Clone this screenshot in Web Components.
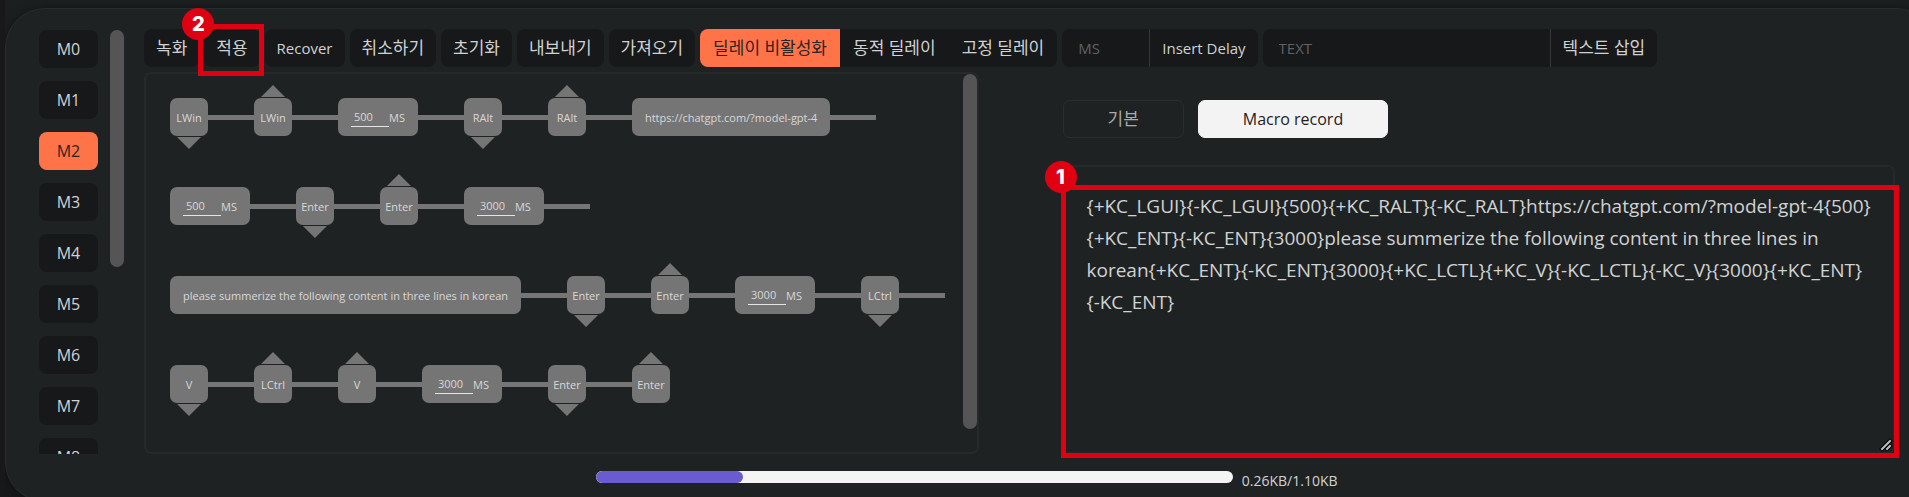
<!DOCTYPE html>
<html lang="ko">
<head>
<meta charset="utf-8">
<title>Macro</title>
<style>
    html {
        height: 100%;
        overflow: hidden;
        background: linear-gradient(#1c1f20 50%, #17181a 80%);
    }
    body {
        margin: 0;
        height: 100%;
        border-left: 5px solid #17181a;
        box-sizing: border-box;
        overflow: hidden;
        font-family: "Open Sans", "Noto Sans CJK KR", sans-serif;
        font-size: 15px;
        color: #d0d2d3;
    }
</style>
</head>
<body>
<macro-page></macro-page>

<script>
const define = (name, html, setup) => {
    const template = document.createElement("template");
    template.innerHTML = html;
    window.customElements.define(name, class extends HTMLElement {
        constructor() {
            super();
            this.attachShadow({ mode: "open" });
            this.shadowRoot.appendChild(template.content.cloneNode(true));
        }

        connectedCallback() {
            if (setup) setup(this, this.shadowRoot);
        }
    });
};

// numbered red frame drawn over whatever it wraps
define("callout-mark", `
<style>
    :host {
        display: block;
        position: relative;
    }
    .frame {
        position: absolute;
        inset: var(--frame-inset, 0);
        border: 5px solid #df0012;
        pointer-events: none;
        z-index: 2;
    }
    .badge {
        position: absolute;
        left: -21px;
        top: var(--badge-top, -21px);
        width: 32px;
        height: 32px;
        border-radius: 50%;
        background: #df0012;
        color: #fff;
        font: 800 20px/32px Inter, sans-serif;
        text-align: center;
    }
</style>
<slot></slot>
<div class="frame"><span class="badge"></span></div>
`, (el, root) => {
    root.querySelector(".badge").textContent = el.getAttribute("number");
});

define("tool-button", `
<style>
    :host {
        display: block;
    }
    button {
        display: block;
        height: 38px;
        padding: 0 var(--pad, 12px);
        border: 0;
        border-radius: var(--radius, 8px);
        background: #17181a;
        color: inherit;
        font: inherit;
        white-space: nowrap;
        cursor: pointer;
    }
    :host([lang="ko"]) button {
        padding-bottom: 3px;
        font-size: 17px;
    }
    :host([active]) button {
        background: #ff7348;
        color: #2b2422;
    }
</style>
<button type="button"><slot></slot></button>
`);

define("tool-insert", `
<style>
    :host {
        display: flex;
        height: 38px;
        border-radius: 8px;
        overflow: hidden;
        background: #17181a;
        --radius: 0;
    }
    input {
        width: var(--field, 88px);
        box-sizing: border-box;
        padding: 0 16px;
        border: 0;
        border-right: 1px solid #34373a;
        outline: 0;
        background: none;
        color: inherit;
        font: inherit;
    }
    input::placeholder {
        color: #5f6162;
        opacity: 1;
    }
</style>
<input type="text">
<slot></slot>
`, (el, root) => {
    const input = root.querySelector("input");
    input.placeholder = el.getAttribute("placeholder");
    input.setAttribute("aria-label", el.getAttribute("placeholder"));
});

define("tool-bar", `
<style>
    :host {
        display: flex;
        gap: 5px;
    }
    .segments {
        display: flex;
        border-radius: 8px;
        overflow: hidden;
        --radius: 0;
        --pad: 13px;
    }
    callout-mark {
        --frame-inset: -5px -4px -9px -6px;
    }
    .text {
        --field: 288px;
    }
</style>
<tool-button lang="ko">녹화</tool-button>
<callout-mark number="2"><tool-button lang="ko">적용</tool-button></callout-mark>
<tool-button>Recover</tool-button>
<tool-button lang="ko">취소하기</tool-button>
<tool-button lang="ko">초기화</tool-button>
<tool-button lang="ko">내보내기</tool-button>
<tool-button lang="ko">가져오기</tool-button>
<div class="segments">
    <tool-button lang="ko" active>딜레이 비활성화</tool-button>
    <tool-button lang="ko">동적 딜레이</tool-button>
    <tool-button lang="ko">고정 딜레이</tool-button>
</div>
<tool-insert placeholder="MS"><tool-button>Insert Delay</tool-button></tool-insert>
<tool-insert class="text" placeholder="TEXT"><tool-button lang="ko">텍스트 삽입</tool-button></tool-insert>
`);

define("macro-list", `
<style>
    :host {
        display: flex;
        gap: 12px;
        min-height: 0;
        overflow: hidden;
    }
    nav {
        display: flex;
        flex-direction: column;
        gap: 13px;
        font-size: 16px;
    }
    button {
        flex: none;
        width: 59px;
        height: 38px;
        padding: 0;
        border: 0;
        border-radius: 8px;
        background: #17181a;
        color: inherit;
        font: inherit;
        cursor: pointer;
    }
    button[aria-current] {
        background: #ff7348;
        color: #2b2422;
    }
    .thumb {
        flex: none;
        width: 14px;
        height: 56%;
        border-radius: 7px;
        background: #555;
    }
</style>
<nav></nav>
<div class="thumb"></div>
`, (el, root) => {
    const nav = root.querySelector("nav");
    for (let i = 0; i < 9; i++) {
        const button = document.createElement("button");
        button.type = "button";
        button.textContent = "M" + i;
        if (i === Number(el.getAttribute("selected"))) button.setAttribute("aria-current", "true");
        nav.appendChild(button);
    }
});

// one step of the macro: key down, key up, text, or a delay with an editable value
define("macro-step", `
<style>
    :host {
        display: flex;
        align-items: center;
        position: relative;
    }
    .node {
        display: flex;
        align-items: center;
        justify-content: center;
        box-sizing: border-box;
        min-width: 38px;
        height: 38px;
        border-radius: 7px;
        background: #757575;
        color: #d8d8d8;
        font-size: 11px;
        white-space: nowrap;
    }
    :host([type="text"]) .node,
    :host([type="delay"]) .node {
        padding: 0 13px;
    }
    .line {
        width: 46px;
        height: 5px;
        background: #757575;
    }
    :host([last]) .line {
        display: none;
    }
    :host([type="down"])::after,
    :host([type="up"])::before {
        content: "";
        position: absolute;
        left: 7px;
        width: 24px;
        height: 12px;
        background: #757575;
    }
    :host([type="down"])::after {
        top: 39px;
        clip-path: polygon(0 0, 100% 0, 50% 100%);
    }
    :host([type="up"])::before {
        bottom: 39px;
        clip-path: polygon(0 100%, 100% 100%, 50% 0);
    }
    input {
        width: 38px;
        height: 20px;
        box-sizing: border-box;
        padding: 0 3px;
        border: 0;
        border-bottom: 1px solid #e4e4e4;
        outline: 0;
        background: none;
        color: inherit;
        font: inherit;
    }
</style>
<div class="node"><slot></slot></div>
<div class="line"></div>
`, (el, root) => {
    if (el.getAttribute("type") !== "delay") return;
    const input = document.createElement("input");
    input.type = "text";
    input.value = el.getAttribute("value");
    input.setAttribute("aria-label", "MS");
    root.querySelector(".node").prepend(input);
});

define("macro-flow", `
<style>
    :host {
        display: flex;
        box-sizing: border-box;
        border: 2px solid #262929;
        border-radius: 7px;
        overflow: hidden;
    }
    .rows {
        flex: 1;
        min-width: 0;
        display: flex;
        flex-direction: column;
        gap: 51px;
        padding: 24px 0 24px 24px;
    }
    .row {
        display: flex;
    }
    .thumb {
        flex: none;
        width: 14px;
        height: 94%;
        border-radius: 7px;
        background: #555;
    }
</style>
<div class="rows">
    <div class="row">
        <macro-step type="down">LWin</macro-step>
        <macro-step type="up">LWin</macro-step>
        <macro-step type="delay" value="500">MS</macro-step>
        <macro-step type="down">RAlt</macro-step>
        <macro-step type="up">RAlt</macro-step>
        <macro-step type="text">https://chatgpt.com/?model-gpt-4</macro-step>
    </div>
    <div class="row">
        <macro-step type="delay" value="500">MS</macro-step>
        <macro-step type="down">Enter</macro-step>
        <macro-step type="up">Enter</macro-step>
        <macro-step type="delay" value="3000">MS</macro-step>
    </div>
    <div class="row">
        <macro-step type="text">please summerize the following content in three lines in korean</macro-step>
        <macro-step type="down">Enter</macro-step>
        <macro-step type="up">Enter</macro-step>
        <macro-step type="delay" value="3000">MS</macro-step>
        <macro-step type="down">LCtrl</macro-step>
    </div>
    <div class="row">
        <macro-step type="down">V</macro-step>
        <macro-step type="up">LCtrl</macro-step>
        <macro-step type="up">V</macro-step>
        <macro-step type="delay" value="3000">MS</macro-step>
        <macro-step type="down">Enter</macro-step>
        <macro-step type="up" last>Enter</macro-step>
    </div>
</div>
<div class="thumb"></div>
`);

define("macro-editor", `
<style>
    :host {
        display: flex;
        flex-direction: column;
    }
    .tabs {
        display: flex;
        gap: 14px;
        padding: 28px 0 0 2px;
        margin-bottom: 27px;
    }
    .tabs button {
        box-sizing: border-box;
        height: 38px;
        padding: 0 44px;
        border: 1px solid #2b2e2f;
        border-radius: 7px;
        background: none;
        color: #a9abac;
        font: inherit;
        font-size: 16px;
    }
    .tabs button[lang="ko"] {
        padding-bottom: 3px;
        font-size: 17px;
    }
    .tabs button[aria-selected="true"] {
        border-color: #f3f3f3;
        background: #f3f3f3;
        color: #1f2223;
    }
    callout-mark {
        flex: 1;
        display: flex;
        --frame-inset: 20px -4px -4px 0;
        --badge-top: -29px;
    }
    textarea {
        flex: 1;
        box-sizing: border-box;
        margin: 0;
        padding: 23px 20px 0 24px;
        border: 2px solid #262929;
        border-radius: 7px;
        outline: 0;
        background: none;
        color: inherit;
        font: inherit;
        font-size: 19px;
        line-height: 32px;
        resize: both;
    }
    textarea::-webkit-resizer {
        background: url("data:image/svg+xml,%3Csvg xmlns='http://www.w3.org/2000/svg' width='15' height='15'%3E%3Cg fill='none' stroke-linecap='square'%3E%3Cpath d='M4 12L12 4M9 12L12 9' stroke='%23000' stroke-width='4'/%3E%3Cpath d='M4 12L12 4M9 12L12 9' stroke='%23bbb' stroke-width='2'/%3E%3C/g%3E%3C/svg%3E") no-repeat right bottom;
    }
</style>
<div class="tabs" role="tablist">
    <button type="button" role="tab" lang="ko" aria-selected="false">기본</button>
    <button type="button" role="tab" aria-selected="true">Macro record</button>
</div>
<callout-mark number="1">
    <textarea aria-label="Macro" spellcheck="false">{+KC_LGUI}{-KC_LGUI}{500}{+KC_RALT}{-KC_RALT}https://chatgpt.com/?model-gpt-4{500}{+KC_ENT}{-KC_ENT}{3000}please summerize the following content in three lines in korean{+KC_ENT}{-KC_ENT}{3000}{+KC_LCTL}{+KC_V}{-KC_LCTL}{-KC_V}{3000}{+KC_ENT}{-KC_ENT}</textarea>
</callout-mark>
`);

define("memory-meter", `
<style>
    :host {
        display: flex;
        justify-content: center;
        gap: 9px;
        font-size: 14px;
        line-height: 20px;
    }
    progress {
        appearance: none;
        width: calc(100vw / 3);
        height: 12px;
        border: 0;
        border-radius: 6px;
        overflow: hidden;
        background: #f4f4f4;
    }
    progress::-webkit-progress-bar {
        background: #f4f4f4;
    }
    progress::-webkit-progress-value {
        border-radius: 6px;
        background: #6a5bd0;
    }
</style>
<progress id="memory" value="23" max="100"></progress>
<label for="memory"><slot></slot></label>
`);

define("macro-page", `
<style>
    :host {
        display: block;
        padding-top: 8px;
    }
    main {
        display: grid;
        grid-template-columns: 86px minmax(0, 1fr);
        grid-template-rows: minmax(0, 1fr) 30px;
        column-gap: 19px;
        row-gap: 17px;
        box-sizing: border-box;
        height: calc(100vh - 3px);
        margin-right: -28px;
        padding: 20px 41px 0 33px;
        border: 1px solid #292c2d;
        border-radius: 40px;
        background: #1f2223;
        box-shadow: 0 0 10px rgba(0, 0, 0, 0.4);
    }
    macro-list {
        padding-top: 1px;
    }
    .work {
        display: flex;
        flex-direction: column;
        gap: 5px;
        min-height: 0;
    }
    .panes {
        flex: 1;
        min-height: 0;
        display: grid;
        grid-template-columns: minmax(0, 1fr) minmax(0, 1fr);
        column-gap: 82px;
    }
    memory-meter {
        grid-column: 1 / -1;
    }
</style>
<main>
    <macro-list selected="2"></macro-list>
    <div class="work">
        <tool-bar></tool-bar>
        <div class="panes">
            <macro-flow></macro-flow>
            <macro-editor></macro-editor>
        </div>
    </div>
    <memory-meter>0.26KB/1.10KB</memory-meter>
</main>
`);
</script>
</body>
</html>
